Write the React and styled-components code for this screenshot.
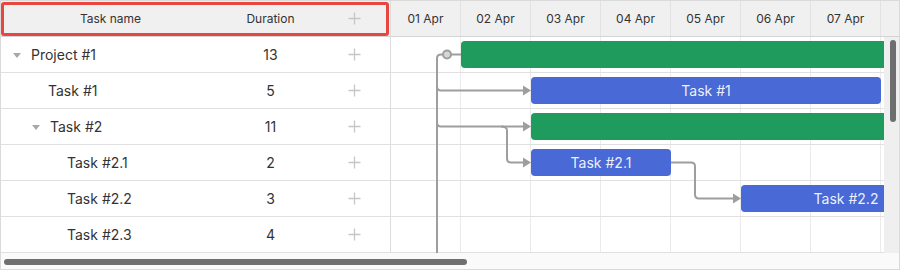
import React from 'react';
import styled, { createGlobalStyle } from 'styled-components';

const DAY = 70;
const ROW = 36;

const tasks = [
  { id: 1, text: 'Project #1', duration: 13, level: 0, parent: true, start: 1, type: 'project' },
  { id: 2, text: 'Task #1', duration: 5, level: 1, start: 2, type: 'task' },
  { id: 3, text: 'Task #2', duration: 11, level: 1, parent: true, start: 2, type: 'project' },
  { id: 4, text: 'Task #2.1', duration: 2, level: 2, start: 2, type: 'task' },
  { id: 5, text: 'Task #2.2', duration: 3, level: 2, start: 5, type: 'task' },
  { id: 6, text: 'Task #2.3', duration: 4, level: 2, start: 8, type: 'task' },
];

const days = ['01 Apr', '02 Apr', '03 Apr', '04 Apr', '05 Apr', '06 Apr', '07 Apr'];

const GlobalStyle = createGlobalStyle`
  body {
    margin: 0;
    font-family: Inter, "Liberation Sans", sans-serif;
    color: #333;
    background: #fff;
  }
`;

const Frame = styled.div`
  width: 900px;
  height: 270px;
  box-sizing: border-box;
  border: 1px solid #dadada;
  display: flex;
  flex-direction: column;
  overflow: hidden;
`;

const Main = styled.div`
  display: flex;
  height: 252px;
`;

const Grid = styled.div`
  width: 390px;
  box-sizing: border-box;
  border-right: 1px solid #dcdcdc;
  display: flex;
  flex-direction: column;
`;

const HeaderRow = styled.div`
  position: relative;
  height: 36px;
  box-sizing: border-box;
  border-bottom: 1px solid #d4d4d4;
  background: #f0f0f0;
  display: flex;
  align-items: center;
  font-size: 12px;
  color: #333;

  &::after {
    content: '';
    position: absolute;
    top: 1px;
    left: 0;
    right: 1px;
    bottom: 0;
    border: 3px solid #e8473f;
    border-radius: 3px;
  }
`;

const Row = styled.div`
  height: ${ROW}px;
  box-sizing: border-box;
  border-bottom: 1px solid #e0e0e0;
  display: flex;
  align-items: center;
  font-size: 14px;
`;

const NameCell = styled.div`
  width: 219px;
  display: flex;
  align-items: center;
  box-sizing: border-box;
  justify-content: ${p => (p.$head ? 'center' : 'flex-start')};
  padding-left: ${p => (p.$head ? 0 : 6 + p.$level * 19)}px;
`;

const Caret = styled.span`
  width: ${p => (p.$show ? 20 : 18)}px;
  height: 20px;
  margin-right: 4px;
  display: flex;
  align-items: center;
  justify-content: center;

  &::before {
    content: '';
    display: ${p => (p.$show ? 'block' : 'none')};
    border-left: 4px solid transparent;
    border-right: 4px solid transparent;
    border-top: 5px solid #a8a8a8;
    margin-top: 2px;
  }
`;

const DurationCell = styled.div`
  width: 101px;
  text-align: center;
`;

const AddCell = styled.div`
  flex: 1;
  display: flex;
  justify-content: center;
  align-items: center;
  padding-right: 2px;
`;

const Timeline = styled.div`
  flex: 1;
  display: flex;
  flex-direction: column;
  min-width: 0;
`;

const ScaleRow = styled.div`
  height: 36px;
  box-sizing: border-box;
  border-bottom: 1px solid #d4d4d4;
  background: #f0f0f0;
  display: flex;
  overflow: hidden;
`;

const ScaleCell = styled.div`
  flex: 0 0 ${DAY}px;
  box-sizing: border-box;
  border-right: 1px solid #e2e2e2;
  display: flex;
  align-items: center;
  justify-content: center;
  font-size: 12px;
  color: #333;
`;

const TimeBody = styled.div`
  flex: 1;
  display: flex;
`;

const Canvas = styled.div`
  flex: 1;
  position: relative;
  overflow: hidden;
`;

const CanvasRow = styled.div`
  height: ${ROW}px;
  box-sizing: border-box;
  border-bottom: 1px solid #e0e0e0;
  background-image: linear-gradient(to right, transparent ${DAY - 1}px, #ebebeb ${DAY - 1}px);
  background-size: ${DAY}px 100%;
`;

const Bar = styled.div`
  position: absolute;
  height: 27px;
  border-radius: 4px;
  background: ${p => (p.$type === 'project' ? '#1f9b5d' : '#4869d6')};
  color: rgba(255, 255, 255, 0.92);
  font-size: 14px;
  line-height: 27px;
  text-align: center;
  white-space: nowrap;
`;

const Links = styled.svg`
  position: absolute;
  inset: 0;
  width: 100%;
  height: 100%;
  pointer-events: none;
`;

const VTrack = styled.div`
  width: 15px;
  background: #efefef;
  padding: 3px 0 0 6px;
  box-sizing: border-box;
`;

const VThumb = styled.div`
  width: 6px;
  height: 82px;
  border-radius: 3px;
  background: #6e6e6e;
`;

const HTrack = styled.div`
  height: 16px;
  background: #fafafa;
  padding: 6px 0 0 3px;
  box-sizing: border-box;
`;

const HThumb = styled.div`
  width: 463px;
  height: 6px;
  border-radius: 3px;
  background: #6f6f6f;
`;

function PlusIcon() {
  return (
    <svg width="13" height="13" viewBox="0 0 13 13">
      <path d="M6.5 0.5v12M0.5 6.5h12" stroke="#c6c6c6" strokeWidth="1.3" fill="none" />
    </svg>
  );
}

const LINK = '#9e9e9e';
const cy = i => i * ROW + 17.5;

function Arrow({ x, y }) {
  return <polygon points={`${x},${y} ${x - 8},${y - 5} ${x - 8},${y + 5}`} fill={LINK} />;
}

function LinkLayer() {
  const s = { stroke: LINK, strokeWidth: 2, fill: 'none' };
  return (
    <Links>
      <path d={`M70 ${cy(0)} H50 Q46 ${cy(0)} 46 ${cy(0) + 4} V300`} {...s} />
      <path d={`M46 ${cy(1) - 4} Q46 ${cy(1)} 50 ${cy(1)} H133`} {...s} />
      <Arrow x={140} y={cy(1)} />
      <path d={`M46 ${cy(2) - 4} Q46 ${cy(2)} 50 ${cy(2)} H133`} {...s} />
      <Arrow x={140} y={cy(2)} />
      <path d={`M110 ${cy(2)} Q116 ${cy(2)} 116 ${cy(2) + 4} V${cy(3) - 4} Q116 ${cy(3)} 120 ${cy(3)} H133`} {...s} />
      <Arrow x={140} y={cy(3)} />
      <path d={`M280 ${cy(3)} H300 Q304 ${cy(3)} 304 ${cy(3) + 4} V${cy(4) - 4} Q304 ${cy(4)} 308 ${cy(4)} H343`} {...s} />
      <Arrow x={350} y={cy(4)} />
      <circle cx="56" cy={cy(0)} r="4" fill="#d6d6d6" stroke={LINK} strokeWidth="2" />
    </Links>
  );
}

export default function App() {
  return (
    <>
      <GlobalStyle />
      <Frame>
        <Main>
          <Grid>
            <HeaderRow>
              <NameCell $head>Task name</NameCell>
              <DurationCell>Duration</DurationCell>
              <AddCell><PlusIcon /></AddCell>
            </HeaderRow>
            {tasks.map(t => (
              <Row key={t.id}>
                <NameCell $level={t.level}>
                  <Caret $show={t.parent} />
                  {t.text}
                </NameCell>
                <DurationCell>{t.duration}</DurationCell>
                <AddCell><PlusIcon /></AddCell>
              </Row>
            ))}
          </Grid>
          <Timeline>
            <ScaleRow>
              {days.map(d => <ScaleCell key={d}>{d}</ScaleCell>)}
            </ScaleRow>
            <TimeBody>
              <Canvas>
                {tasks.map(t => <CanvasRow key={t.id} />)}
                <LinkLayer />
                {tasks.map((t, i) => (
                  <Bar
                    key={t.id}
                    $type={t.type}
                    style={{ left: t.start * DAY, top: i * ROW + 4, width: t.duration * DAY }}
                  >
                    {t.type === 'task' && t.start < 7 ? t.text : null}
                  </Bar>
                ))}
              </Canvas>
              <VTrack><VThumb /></VTrack>
            </TimeBody>
          </Timeline>
        </Main>
        <HTrack><HThumb /></HTrack>
      </Frame>
    </>
  );
}
